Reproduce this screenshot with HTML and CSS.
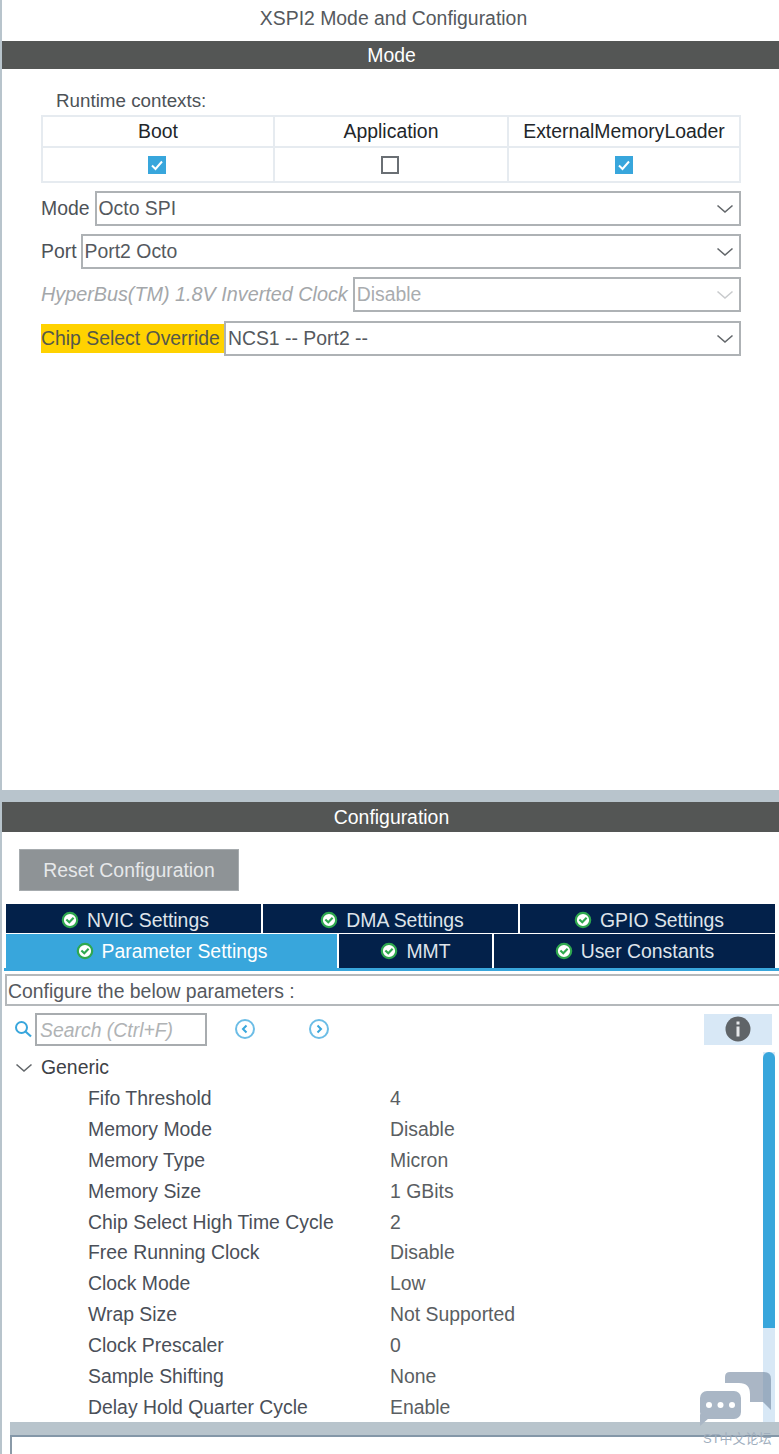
FILE: index.html
```html
<!DOCTYPE html>
<html lang="en">
<head>
  <meta charset="UTF-8" />
  <title>XSPI2 Mode and Configuration</title>
  <link rel="stylesheet" href="styles.css">
</head>
<body>
  <svg class="defs" width="0" height="0">
    <symbol id="ok" viewBox="0 0 20 20">
      <circle cx="10" cy="10" r="8" fill="#fff" stroke="#2fa84f" stroke-width="2.4"/>
      <path d="M6 9.500l3.200 3L14 7.600" fill="none" stroke="#2fa84f" stroke-width="2.4"/>
    </symbol>
    <symbol id="chev" viewBox="0 0 18 10">
      <path d="M1.500 1.500L9 8l7.500-6.500" fill="none" stroke="currentColor" stroke-width="1.6"/>
    </symbol>
    <symbol id="tick" viewBox="0 0 18 18">
      <rect width="18" height="18" fill="#38a6dc"/>
      <path d="M4 9.500l3.500 3.500L14 5.500" fill="none" stroke="#fff" stroke-width="2"/>
    </symbol>
  </svg>

  <div class="title">XSPI2 Mode and Configuration</div>
  <div class="bar">Mode</div>

  <div class="mode">
    <div class="contexts-label">Runtime contexts:</div>
    <table class="contexts">
      <tr>
        <th class="col-boot">Boot</th>
        <th class="col-app">Application</th>
        <th>ExternalMemoryLoader</th>
      </tr>
      <tr>
        <td><svg class="check"><use href="#tick"/></svg></td>
        <td><span class="unchecked"></span></td>
        <td><svg class="check"><use href="#tick"/></svg></td>
      </tr>
    </table>

    <div class="field">
      <label>Mode</label>
      <div class="select">Octo SPI<svg class="arrow"><use href="#chev"/></svg></div>
    </div>
    <div class="field port">
      <label>Port</label>
      <div class="select">Port2 Octo<svg class="arrow"><use href="#chev"/></svg></div>
    </div>
    <div class="field disabled">
      <label>HyperBus(TM) 1.8V Inverted Clock</label>
      <div class="select">Disable<svg class="arrow"><use href="#chev"/></svg></div>
    </div>
    <div class="field warn">
      <label>Chip Select Override</label>
      <div class="select">NCS1 -- Port2 --<svg class="arrow"><use href="#chev"/></svg></div>
    </div>
  </div>

  <div class="splitter"></div>
  <div class="bar bar-config">Configuration</div>

  <div class="config">
    <button class="reset">Reset Configuration</button>

    <div class="tabs tabs-top">
      <div class="tab"><svg class="ok"><use href="#ok"/></svg>NVIC Settings</div>
      <div class="tab"><svg class="ok"><use href="#ok"/></svg>DMA Settings</div>
      <div class="tab"><svg class="ok"><use href="#ok"/></svg>GPIO Settings</div>
    </div>
    <div class="tabs tabs-bottom">
      <div class="tab active"><svg class="ok"><use href="#ok"/></svg>Parameter Settings</div>
      <div class="tab"><svg class="ok"><use href="#ok"/></svg>MMT</div>
      <div class="tab"><svg class="ok"><use href="#ok"/></svg>User Constants</div>
    </div>
    <div class="tab-line"></div>

    <div class="hint">Configure the below parameters :</div>

    <div class="search-row">
      <svg class="search-icon" viewBox="0 0 18 18">
        <circle cx="7.500" cy="7.500" r="5.500" fill="none" stroke="#38a6dc" stroke-width="2"/>
        <path d="M11.500 11.500L17 16.500" stroke="#38a6dc" stroke-width="2.200"/>
      </svg>
      <div class="search">Search (Ctrl+F)</div>
      <svg class="nav nav-prev" viewBox="0 0 22 22">
        <circle cx="11" cy="11" r="9" fill="none" stroke="#6cbde6" stroke-width="2"/>
        <path d="M12.500 7.500L9 11l3.500 3.500" fill="none" stroke="#38a6dc" stroke-width="2"/>
      </svg>
      <svg class="nav nav-next" viewBox="0 0 22 22">
        <circle cx="11" cy="11" r="9" fill="none" stroke="#6cbde6" stroke-width="2"/>
        <path d="M9.500 7.500L13 11l-3.500 3.500" fill="none" stroke="#38a6dc" stroke-width="2"/>
      </svg>
      <div class="info">
        <svg viewBox="0 0 26 26" width="26" height="26">
          <circle cx="13" cy="13" r="12.500" fill="#5f6468"/>
          <rect x="11.500" y="10.500" width="3" height="10" fill="#e6e8ea"/>
          <rect x="11.500" y="5.500" width="3" height="3" fill="#e6e8ea"/>
        </svg>
      </div>
    </div>

    <div class="tree-wrap">
      <div class="tree">
        <div class="group"><svg class="group-arrow"><use href="#chev"/></svg>Generic</div>
        <div class="param"><span>Fifo Threshold</span><span>4</span></div>
        <div class="param"><span>Memory Mode</span><span>Disable</span></div>
        <div class="param"><span>Memory Type</span><span>Micron</span></div>
        <div class="param"><span>Memory Size</span><span>1 GBits</span></div>
        <div class="param"><span>Chip Select High Time Cycle</span><span>2</span></div>
        <div class="param"><span>Free Running Clock</span><span>Disable</span></div>
        <div class="param"><span>Clock Mode</span><span>Low</span></div>
        <div class="param"><span>Wrap Size</span><span>Not Supported</span></div>
        <div class="param"><span>Clock Prescaler</span><span>0</span></div>
        <div class="param"><span>Sample Shifting</span><span>None</span></div>
        <div class="param"><span>Delay Hold Quarter Cycle</span><span>Enable</span></div>
      </div>
      <div class="scrollbar"><div class="thumb"></div></div>
    </div>

    <div class="h-split"></div>
    <div class="desc"></div>
  </div>

  <div class="watermark">
    <svg viewBox="0 0 72 56" width="72" height="56">
      <path d="M30 0h34q7 0 7 7v31l-8-8H50V22q0-11-11-11H25V5q0-5 5-5z" fill="#71859e" fill-opacity="0.6"/>
      <rect x="-2" y="17" width="45" height="32" rx="9" fill="#fff"/>
      <rect x="0" y="19" width="41" height="28" rx="7" fill="#a9b6c5"/>
      <path d="M0 42v12l9-8z" fill="#a9b6c5"/>
      <circle cx="9" cy="33" r="3" fill="#fff"/>
      <circle cx="20.500" cy="33" r="3" fill="#fff"/>
      <circle cx="32" cy="33" r="3" fill="#fff"/>
    </svg>
    <span class="watermark-text">ST中文论坛</span>
  </div>
</body>
</html>
```

FILE: styles.css
```css
html, body {
  margin: 0;
  padding: 0;
}
body {
  position: relative;
  width: 779px;
  height: 1454px;
  overflow: hidden;
  box-sizing: border-box;
  border-left: 2px solid #b8c4cc;
  background: #fff;
  color: #4d5257;
  font-family: "Liberation Sans", Arial, sans-serif;
  font-size: 19.400px;
  display: flex;
  flex-direction: column;
}
.defs {
  position: absolute;
}
.title {
  height: 41px;
  line-height: 36px;
  text-align: center;
  color: #55595d;
  padding-left: 6px;
  box-sizing: border-box;
}
.bar {
  height: 28px;
  line-height: 28px;
  text-align: center;
  background: #545655;
  color: #fff;
  padding-left: 2px;
}
.bar-config {
  height: 30px;
  line-height: 30px;
}
.mode {
  height: 721px;
  padding-left: 39px;
  box-sizing: border-box;
}
.contexts-label {
  margin: 20px 0 0 15px;
  height: 26px;
  line-height: 24px;
  font-size: 18.800px;
}
.contexts {
  width: 700px;
  border-collapse: collapse;
  table-layout: fixed;
  margin-bottom: 8px;
  border: 2px solid #e6ebf0;
}
.contexts th, .contexts td {
  border: 2px solid #e6ebf0;
  padding: 0;
  text-align: center;
}
.contexts th {
  height: 29px;
  font-weight: normal;
  color: #22262a;
}
.contexts td {
  height: 33px;
  line-height: 0;
}
.col-boot {
  width: 230px;
}
.col-app {
  width: 232px;
}
.check {
  width: 18px;
  height: 18px;
  margin-right: 2px;
}
.contexts td:last-child .check {
  margin-right: 0;
}
.unchecked {
  display: inline-block;
  width: 14px;
  height: 14px;
  border: 2px solid #6a6f74;
  margin-right: 2px;
}
.field {
  display: flex;
  align-items: center;
  width: 700px;
  height: 35px;
  margin-bottom: 8px;
  white-space: nowrap;
}
.field label {
  padding-right: 5px;
}
.port label {
  padding-right: 4px;
}
.select {
  flex: 1;
  position: relative;
  height: 35px;
  line-height: 31px;
  box-sizing: border-box;
  border: 2px solid #aeb2b5;
  padding-left: 2px;
  color: #55595e;
}
.arrow {
  position: absolute;
  right: 5px;
  top: 11px;
  width: 18px;
  height: 10px;
  color: #63676b;
}
.disabled label {
  font-style: italic;
  font-size: 19.800px;
  color: #a4a7aa;
}
.disabled .select {
  color: #a9acaf;
}
.disabled .arrow {
  color: #c9cbcd;
}
.warn {
  margin-top: 9px;
}
.warn label {
  background: #ffd200;
  height: 29px;
  line-height: 29px;
  padding-right: 4px;
  color: #55584a;
}
.splitter {
  height: 12px;
  background: #b8c4cc;
}
.config {
  flex: 1;
  min-height: 0;
  display: flex;
  flex-direction: column;
}
.reset {
  width: 220px;
  height: 42px;
  margin: 17px 0 13px 17px;
  border: 1px solid #a6abae;
  background: #8e9396;
  color: #e6e8ea;
  font: 19.400px "Liberation Sans", Arial, sans-serif;
  padding: 0;
}
.tabs {
  display: flex;
  gap: 2px;
  margin-left: 4px;
  width: 769px;
}
.tab {
  background: #03214a;
  color: #dfe4ea;
  display: flex;
  align-items: center;
  justify-content: center;
  white-space: nowrap;
  box-sizing: border-box;
}
.ok {
  width: 18px;
  height: 18px;
  margin-right: 8px;
}
.tabs-top {
  margin-bottom: 1px;
}
.tabs-top .tab {
  flex: 1;
  height: 29px;
  padding: 3px 0 0 3px;
}
.tabs-bottom .tab {
  height: 34px;
}
.tabs-bottom .tab:nth-child(1) {
  width: 331px;
}
.tabs-bottom .tab:nth-child(2) {
  width: 153px;
}
.tabs-bottom .tab:nth-child(3) {
  flex: 1;
}
.tab.active {
  background: #38a6dc;
  color: #fff;
}
.tab-line {
  height: 3px;
  margin-left: 2px;
  background: #38a6dc;
}
.hint {
  height: 32px;
  line-height: 30px;
  margin: 3px -4px 0 3px;
  box-sizing: border-box;
  border: 2px solid #b4b8bb;
  padding-left: 1px;
  color: #55595e;
}
.search-row {
  height: 46px;
  display: flex;
  align-items: center;
  position: relative;
}
.search-icon {
  width: 18px;
  height: 18px;
  margin: 0 3px 0 12px;
}
.search {
  width: 172px;
  height: 33px;
  line-height: 31px;
  box-sizing: border-box;
  border: 2px solid #a8acaf;
  padding-left: 3px;
  font-style: italic;
  color: #b0b3b5;
}
.nav {
  width: 22px;
  height: 22px;
}
.nav-prev {
  margin-left: 27px;
}
.nav-next {
  margin-left: 52px;
}
.info {
  width: 68px;
  height: 31px;
  margin-left: auto;
  margin-right: 7px;
  background: #d8e8f6;
  display: flex;
  align-items: center;
  justify-content: center;
}
.tree-wrap {
  height: 370px;
  position: relative;
  overflow: hidden;
}
.group {
  height: 31px;
  line-height: 30px;
  padding-left: 39px;
  position: relative;
  color: #3d4147;
}
.group-arrow {
  position: absolute;
  left: 13px;
  top: 11px;
  width: 18px;
  height: 10px;
  color: #63676b;
}
.param {
  height: 30.900px;
  line-height: 30.900px;
  display: grid;
  grid-template-columns: 302px 1fr;
  padding-left: 86px;
  color: #4a4f58;
}
.param span:last-child {
  color: #5a5e62;
}
.scrollbar {
  position: absolute;
  right: 4px;
  top: 0;
  width: 12px;
  height: 100%;
  background: #d8e8f6;
}
.thumb {
  height: 276px;
  background: #38a6dc;
  border-radius: 6px 6px 0 0;
}
.h-split {
  height: 13px;
  margin-left: 8px;
  background: #b8c4cc;
  border-bottom: 2px solid #8497a8;
}
.desc {
  flex: 1;
  margin-left: 8px;
  border-left: 2px solid #8a9aa8;
}
.watermark {
  position: absolute;
  left: 698px;
  top: 1372px;
  width: 78px;
}
.watermark svg {
  display: block;
}
.watermark-text {
  display: block;
  margin: 4px 0 0 3px;
  font-size: 13px;
  line-height: 14px;
  white-space: nowrap;
  color: #a0aebd;
  font-family: "Liberation Sans", "Noto Sans CJK SC", sans-serif;
}
```
